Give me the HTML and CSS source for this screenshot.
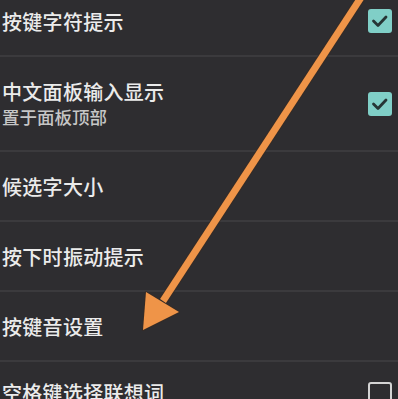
FILE: index.html
```html
<!DOCTYPE html>
<html lang="zh">
<head>
<meta charset="utf-8">
<link rel="stylesheet" href="styles.css">
</head>
<body>
<div class="list">
  <div class="row">
    <div class="title">按键字符提示</div>
    <div class="check on"><svg viewBox="0 0 24 24"><polyline points="5.5,12 10,16.5 18,8"/></svg></div>
  </div>
  <div class="row tall">
    <div class="texts">
      <div class="title">中文面板输入显示</div>
      <div class="sub">置于面板顶部</div>
    </div>
    <div class="check on"><svg viewBox="0 0 24 24"><polyline points="5.5,12 10,16.5 18,8"/></svg></div>
  </div>
  <div class="row">
    <div class="title">候选字大小</div>
  </div>
  <div class="row">
    <div class="title">按下时振动提示</div>
  </div>
  <div class="row">
    <div class="title">按键音设置</div>
  </div>
  <div class="row last">
    <div class="title">空格键选择联想词</div>
    <div class="check off"></div>
  </div>
</div>
<svg class="arrow" viewBox="0 0 398 399" width="398" height="399">
  <line x1="362" y1="-4" x2="163" y2="301" class="shaft-shadow"/>
  <polygon points="143,330 146,292 179,312" class="head-shadow"/>
  <line x1="362" y1="-4" x2="163" y2="301" class="shaft"/>
  <polygon points="143,330 146,292 179,312" class="head"/>
</svg>
</body>
</html>
```

FILE: styles.css
```css
html, body {
  margin: 0;
  padding: 0;
  background: #2e2d30;
  overflow: hidden;
}
body {
  width: 398px;
  height: 399px;
  position: relative;
  font-family: "Noto Sans CJK SC", "Noto Sans", sans-serif;
}
.list {
  margin-top: -13px;
}
.row {
  box-sizing: border-box;
  height: 70px;
  display: flex;
  align-items: center;
  justify-content: space-between;
  padding: 0 6px 0 2px;
  border-bottom: 2px solid #3b3a3d;
}
.row.tall {
  height: 95px;
}
.row.last {
  padding-bottom: 8px;
}
.title {
  font-size: 20px;
  line-height: 25px;
  color: #ebebeb;
  font-weight: 500;
  letter-spacing: 0.3px;
}
.sub {
  font-size: 17.5px;
  line-height: 25px;
  color: #c6c6c6;
  font-weight: 500;
}
.check {
  box-sizing: border-box;
  width: 24px;
  height: 24px;
  border-radius: 3px;
  flex: none;
}
.check.on {
  background: #80cfc7;
}
.check.on svg {
  width: 24px;
  height: 24px;
  display: block;
}
.check.on polyline {
  fill: none;
  stroke: #263535;
  stroke-width: 2.8;
  stroke-linecap: round;
  stroke-linejoin: round;
}
.check.off {
  border: 2.5px solid #d4d4d4;
  align-self: flex-start;
  margin-top: 20px;
}
.arrow {
  position: absolute;
  left: 0;
  top: 0;
  pointer-events: none;
}
.shaft {
  stroke: #ef9448;
  stroke-width: 7;
}
.shaft-shadow {
  stroke: #3a2a20;
  stroke-width: 9;
  opacity: 0.6;
}
.head {
  fill: #ef9448;
}
.head-shadow {
  fill: none;
  stroke: #3a2a20;
  stroke-width: 2;
  stroke-linejoin: round;
  opacity: 0.6;
}
```
